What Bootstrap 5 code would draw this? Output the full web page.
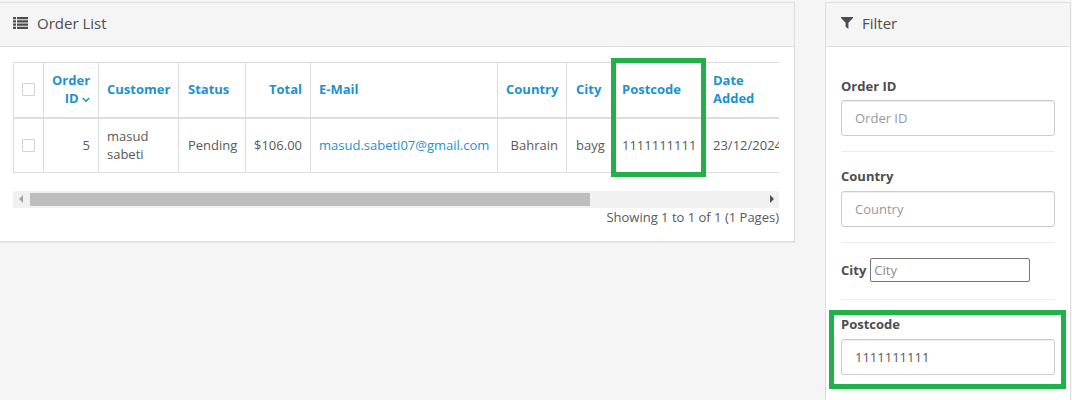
<!DOCTYPE html>
<html lang="en">
<head>
  <meta charset="UTF-8">
  <title>Order List</title>
  <link href="https://cdn.jsdelivr.net/npm/bootstrap@5.3.0/dist/css/bootstrap.min.css" rel="stylesheet">
  <style>
    html, body { height: 400px; overflow: hidden; }
    body {
      background: #f5f5f5;
      color: #595959;
      font-family: "Open Sans", sans-serif;
      font-size: 13px;
      line-height: 18px;
    }
    .page-wrap { padding-top: 2px; position: relative; height: 400px; overflow: hidden; }
    .list-panel {
      width: 796px;
      margin-left: -1px;
      height: 240px;
      flex: none;
      background: #fff;
      border: 1px solid #ddd;
      border-radius: 0;
      box-shadow: 0 1px 1px rgba(0,0,0,.05);
    }
    .filter-panel {
      width: 246px;
      margin-left: 30px;
      flex: none;
      height: 420px;
      background: #fff;
      border: 1px solid #ddd;
      border-radius: 0;
    }
    .panel-head {
      height: 44px;
      background: #f5f5f5;
      border-bottom: 1px solid #ddd;
      padding: 0 13px 4px;
      font-size: 15px;
      color: #4d4d4d;
      display: flex;
      align-items: center;
      gap: 9px;
    }
    .filter-panel .panel-head { padding-left: 15px; }
    .list-body { padding: 15px 15px 0 13px; }
    .table-clip { width: 766px; overflow: hidden; }
    .order-table {
      table-layout: fixed;
      width: 860px;
      margin: 0;
      border-collapse: collapse;
      color: #595959;
    }
    .order-table th, .order-table td {
      border: 1px solid #ddd;
      padding: 8px 8px;
      vertical-align: middle;
      font-size: 13px;
      line-height: 18px;
      background: #fff;
      color: #595959;
      font-weight: 400;
      box-shadow: none;
    }
    .order-table thead th { height: 55px; padding-bottom: 10px; border-bottom: 2px solid #ddd; font-weight: 700; }
    .order-table tbody td { height: 54px; }
    .order-table tr > :nth-child(4),
    .order-table tr > :nth-child(8),
    .order-table tr > :nth-child(9) { padding-left: 9px; }
    .order-table a { color: #1e91cf; text-decoration: none; }
    .tick {
      display: block;
      width: 13px;
      height: 13px;
      margin: 0 auto;
      background: #fff;
      border: 1px solid #d4d4d4;
      border-radius: 1px;
    }
    .fake-scroll {
      height: 17px;
      margin-top: 18px;
      background: #f1f1f1;
      display: flex;
      align-items: center;
      justify-content: space-between;
      position: relative;
    }
    .scroll-thumb {
      position: absolute;
      left: 17px;
      top: 2px;
      width: 560px;
      height: 13px;
      background: #bebebe;
    }
    .arrow-l, .arrow-r { width: 0; height: 0; border-top: 4px solid transparent; border-bottom: 4px solid transparent; }
    .arrow-l { border-right: 4px solid #a3a3a3; margin-left: 6px; }
    .arrow-r { border-left: 4px solid #505050; margin-right: 5px; }
    .page-info { text-align: right; height: 18px; line-height: 18px; }
    .filter-body { padding: 29.6px 15px 0 15px; }
    .filter-row { padding-bottom: 15px; margin-bottom: 15px; border-bottom: 1px solid #ededed; }
    .filter-row label { display: block; font-weight: 700; line-height: 18.57px; margin-bottom: 5px; color: #4d4d4d; }
    .filter-input {
      height: 36px;
      border: 1px solid #ccc;
      border-radius: 3px;
      padding: 8px 13px;
      font-size: 13px;
      color: #595959;
      box-shadow: inset 0 1px 1px rgba(0,0,0,.075);
    }
    .filter-input::placeholder { color: #999; opacity: 1; }
    .city-line { display: flex; align-items: center; gap: 4px; padding-bottom: 17.4px; }
    .city-line label { margin: 2px 0 0; }
    .city-input {
      width: 160px;
      height: 24px;
      border: 1px solid #767676;
      border-radius: 2px;
      padding: 1px 3px;
      font: 13px "Open Sans", sans-serif;
    }
    .city-input::placeholder { color: #8a8a8a; opacity: 1; }
    .green-box { position: absolute; border: 5px solid #22b04b; pointer-events: none; }
    .box-column { left: 611px; top: 58px; width: 95px; height: 119px; }
    .box-field { left: 829px; top: 310px; width: 237px; height: 79px; }
  </style>
</head>
<body>
<div class="page-wrap d-flex align-items-start">

  <div class="list-panel">
    <div class="panel-head">
      <svg width="15" height="12" viewBox="0 0 15 12" fill="#4d4d4d"><path d="M0 0h3v2.2H0zM4 0h11v2.2H4zM0 3.2h3v2.2H0zM4 3.2h11v2.2H4zM0 6.5h3v2.2H0zM4 6.5h11v2.2H4zM0 9.7h3V12H0zM4 9.7h11V12H4z"/></svg>
      <span>Order List</span>
    </div>
    <div class="list-body">
      <div class="table-clip">
        <table class="table order-table">
          <colgroup>
            <col style="width:30px"><col style="width:55px"><col style="width:80px"><col style="width:67px"><col style="width:65px"><col style="width:187px"><col style="width:69px"><col style="width:46px"><col style="width:92px"><col style="width:169px">
          </colgroup>
          <thead>
            <tr>
              <th><span class="tick"></span></th>
              <th class="text-end"><a href="#">Order ID <svg width="8" height="6" viewBox="0 0 8 6" fill="none" stroke="#1e91cf" stroke-width="1.6"><path d="M.8 1l3.2 3.2L7.2 1"/></svg></a></th>
              <th><a href="#">Customer</a></th>
              <th><a href="#">Status</a></th>
              <th class="text-end"><a href="#">Total</a></th>
              <th><a href="#">E-Mail</a></th>
              <th class="text-end"><a href="#">Country</a></th>
              <th><a href="#">City</a></th>
              <th><a href="#">Postcode</a></th>
              <th><a href="#">Date<br>Added</a></th>
            </tr>
          </thead>
          <tbody>
            <tr>
              <td><span class="tick"></span></td>
              <td class="text-end">5</td>
              <td>masud sabeti</td>
              <td>Pending</td>
              <td class="text-end">$106.00</td>
              <td><a href="#">masud.sabeti07@gmail.com</a></td>
              <td class="text-end">Bahrain</td>
              <td>bayg</td>
              <td>1111111111</td>
              <td>23/12/2024</td>
            </tr>
          </tbody>
        </table>
      </div>
      <div class="fake-scroll table-clip">
        <span class="arrow-l"></span>
        <span class="scroll-thumb"></span>
        <span class="arrow-r"></span>
      </div>
      <div class="page-info table-clip">Showing 1 to 1 of 1 (1 Pages)</div>
    </div>
  </div>

  <div class="filter-panel">
    <div class="panel-head">
      <svg width="12" height="12" viewBox="0 0 12 12" fill="#4d4d4d"><path d="M0 0h12v1L7.4 5.8V12L4.6 9.8v-4L0 1z"/></svg>
      <span>Filter</span>
    </div>
    <div class="filter-body">
      <div class="filter-row">
        <label for="fId">Order ID</label>
        <input id="fId" class="form-control filter-input" placeholder="Order ID">
      </div>
      <div class="filter-row">
        <label for="fCountry">Country</label>
        <input id="fCountry" class="form-control filter-input" placeholder="Country">
      </div>
      <div class="filter-row city-line">
        <label for="fCity">City</label>
        <input id="fCity" class="city-input" placeholder="City">
      </div>
      <div class="filter-row">
        <label for="fPost">Postcode</label>
        <input id="fPost" class="form-control filter-input" value="1111111111">
      </div>
    </div>
  </div>

  <div class="green-box box-column"></div>
  <div class="green-box box-field"></div>
</div>
<script src="https://cdn.jsdelivr.net/npm/bootstrap@5.3.0/dist/js/bootstrap.bundle.min.js"></script>
</body>
</html>
